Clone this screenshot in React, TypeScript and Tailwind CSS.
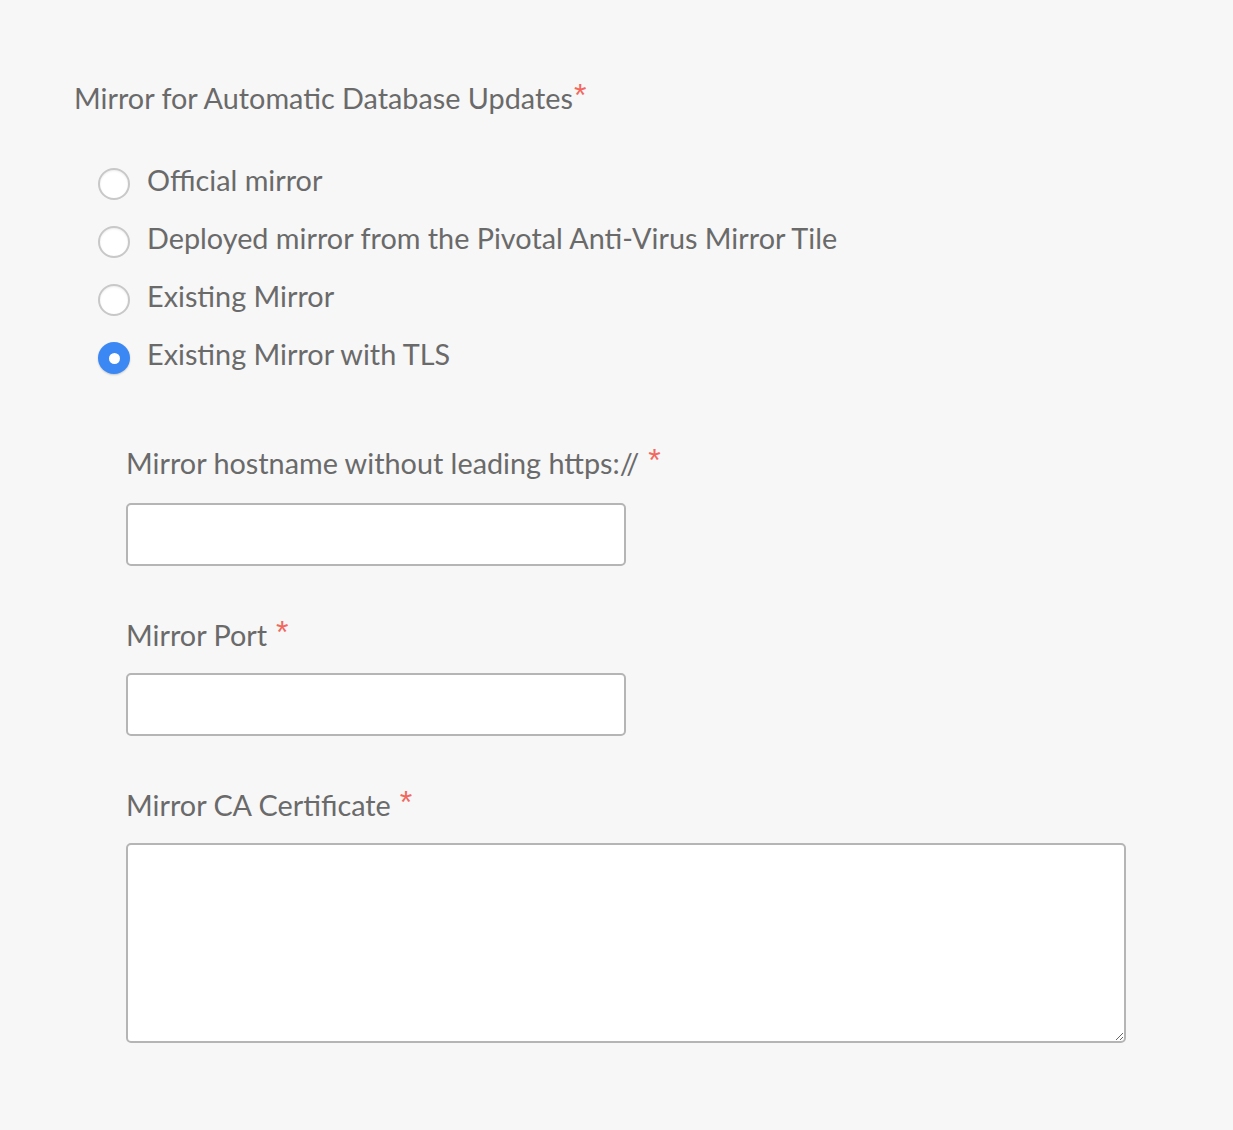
import React from "react";

const Star = ({ gap = true }: { gap?: boolean }) => (
  <span
    className={`text-[#f2685e] text-[32px] leading-none self-start mt-[-3px] ${gap ? "ml-[9px]" : "ml-[1px]"}`}
    style={{ fontFamily: "'Liberation Sans', sans-serif", fontWeight: 400 }}
  >
    *
  </span>
);

function Radio({ label, checked }: { label: string; checked?: boolean }) {
  return (
    <div className="flex items-center h-[58px]">
      {checked ? (
        <span className="mt-[4px] w-[32px] h-[32px] rounded-full bg-[#3b88f5] flex items-center justify-center shadow-[0_1px_2px_rgba(0,0,0,0.2)]">
          <span className="w-[11px] h-[11px] rounded-full bg-white" />
        </span>
      ) : (
        <span className="mt-[4px] w-[32px] h-[32px] rounded-full bg-white border-[2px] border-[#c8c8c8] shadow-[inset_0_1px_2px_rgba(0,0,0,0.08)]" />
      )}
      <span className="ml-[17px] pb-[3px]">{label}</span>
    </div>
  );
}

export default function App() {
  return (
    <div
      className="min-h-[1130px] w-[1233px] bg-[#f7f7f7] text-[#6a6a6a] text-[28.8px] leading-none"
      style={{ fontFamily: "Lato, 'Open Sans', sans-serif", fontWeight: 400 }}
    >
      <div className="pt-[82px] pl-[74px]">
        <div className="h-[32px] flex items-center">
          <span>Mirror for Automatic Database Updates</span>
          <Star gap={false} />
        </div>
        <div className="mt-[39px] pl-[24px] flex flex-col">
          <Radio label="Official mirror" />
          <Radio label="Deployed mirror from the Pivotal Anti-Virus Mirror Tile" />
          <Radio label="Existing Mirror" />
          <Radio label="Existing Mirror with TLS" checked />
        </div>
        <div className="pl-[52px] mt-[62px] flex flex-col">
          <div className="h-[32px] flex items-center">
            <span>Mirror hostname without leading https://</span>
            <Star />
          </div>
          <input className="mt-[24px] w-[500px] h-[63px] bg-white border-[2px] border-[#b5b5b5] rounded-[5px] outline-none" />
          <div className="mt-[53px] h-[32px] flex items-center">
            <span>Mirror Port</span>
            <Star />
          </div>
          <input className="mt-[22px] w-[500px] h-[63px] bg-white border-[2px] border-[#b5b5b5] rounded-[5px] outline-none" />
          <div className="mt-[53px] h-[32px] flex items-center">
            <span>Mirror CA Certificate</span>
            <Star />
          </div>
          <textarea className="mt-[22px] w-[1000px] h-[200px] bg-white border-[2px] border-[#b5b5b5] rounded-[5px] outline-none resize" />
        </div>
      </div>
    </div>
  );
}
